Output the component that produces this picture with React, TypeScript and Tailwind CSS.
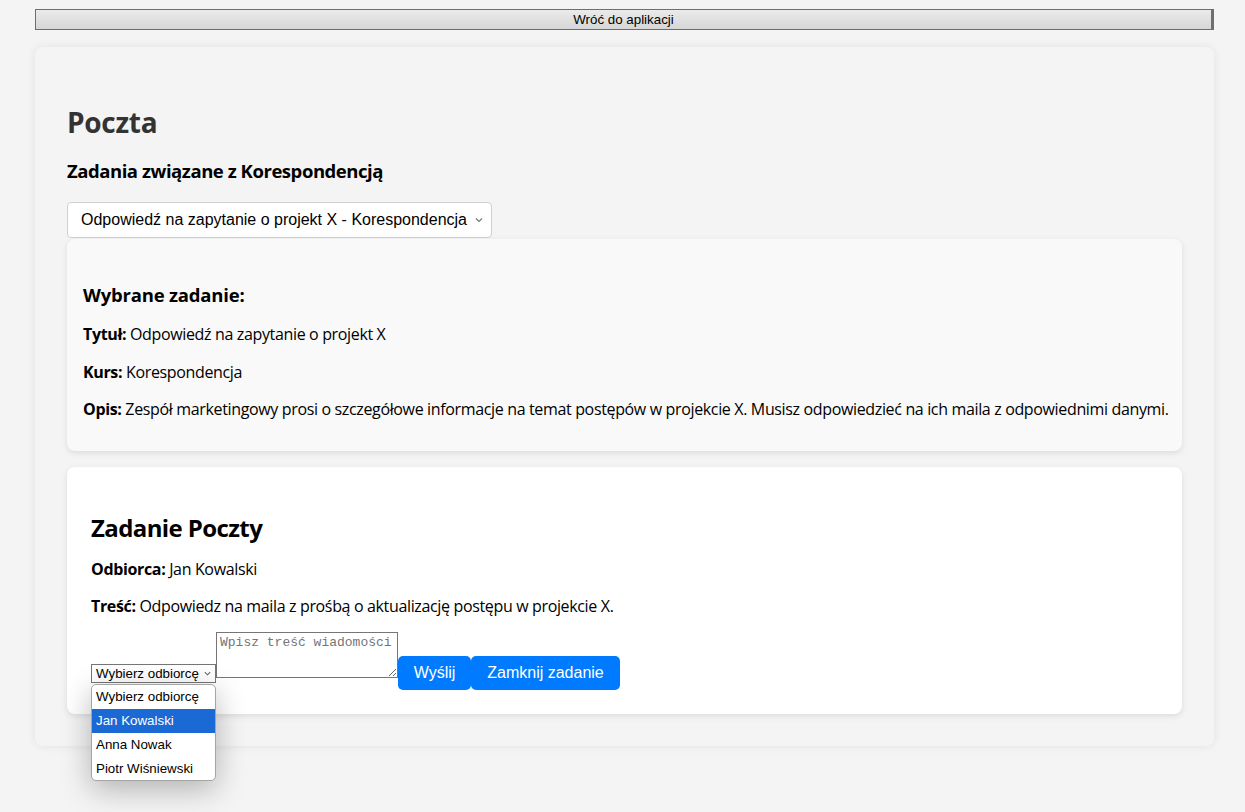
import React from "react";

export default function App() {
  return (
    <div className="min-h-[812px] bg-[#f4f4f4] px-[35px] pt-[9px] pb-[66px] font-['Open_Sans',sans-serif] text-black">
      <button className="block h-[21px] w-[1179px] border border-r-[3px] border-[#6e6e6e] bg-gradient-to-b from-[#ebebeb] to-[#d6d6d6] text-center font-['Liberation_Sans',Arial,sans-serif] text-[13.33px] leading-[18px] text-black">
        Wróć do aplikacji
      </button>

      <div className="mt-[17px] w-[1179px] rounded-[8px] bg-[#f4f4f4] px-[32px] pt-[57px] pb-[32px] shadow-[0_0_10px_rgba(0,0,0,0.08)]">
        <h1 className="text-[28px] font-bold leading-[36px] text-[#333] tracking-[-0.3px]">Poczta</h1>
        <h2 className="mt-[19px] text-[18.5px] font-bold leading-[24px] tracking-[-0.45px]">Zadania związane z Korespondencją</h2>

        <div className="mt-[19px] flex h-[36px] w-[425px] items-center justify-between rounded-[4px] border border-[#cfcfcf] bg-white pl-[13px] pr-[7px] font-['Liberation_Sans',Arial,sans-serif] text-[16px] text-black">
          <span>Odpowiedź na zapytanie o projekt X - Korespondencja</span>
          <svg width="10" height="10" viewBox="0 0 10 10" className="text-[#777]">
            <path d="M2 3.5 L5 6.5 L8 3.5" fill="none" stroke="currentColor" strokeWidth="1.2" />
          </svg>
        </div>

        <div className="mt-px flex flex-col rounded-[8px] bg-[#f9f9f9] px-4 pt-[44px] pb-[30px] shadow-[0_2px_6px_rgba(0,0,0,0.1)]">
          <h3 className="text-[18.5px] font-bold leading-[24px] tracking-[-0.2px]">Wybrane zadanie:</h3>
          <p className="mt-[17px] text-[16px] leading-[21.5px] tracking-[-0.35px]"><b>Tytuł:</b> Odpowiedź na zapytanie o projekt X</p>
          <p className="mt-4 text-[16px] leading-[21.5px] tracking-[-0.35px]"><b>Kurs:</b> Korespondencja</p>
          <p className="mt-4 whitespace-nowrap text-[16px] leading-[21.5px] tracking-[-0.35px]"><b>Opis:</b> Zespół marketingowy prosi o szczegółowe informacje na temat postępów w projekcie X. Musisz odpowiedzieć na ich maila z odpowiednimi danymi.</p>
        </div>

        <div className="mt-4 flex flex-col rounded-[8px] bg-white px-6 pt-[46px] pb-[24px] shadow-[0_2px_6px_rgba(0,0,0,0.1)]">
          <h2 className="text-[24px] font-bold leading-[30px] tracking-[-0.6px]">Zadanie Poczty</h2>
          <p className="mt-4 text-[16px] leading-[21.5px] tracking-[-0.35px]"><b>Odbiorca:</b> Jan Kowalski</p>
          <p className="mt-4 text-[16px] leading-[21.5px] tracking-[-0.35px]"><b>Treść:</b> Odpowiedz na maila z prośbą o aktualizację postępu w projekcie X.</p>

          <div className="mt-[14.5px] flex items-end">
            <div className="relative mb-[7px]">
              <div className="flex h-[19px] w-[125px] items-center justify-between border border-[#767676] bg-white pl-[4px] pr-[3px] font-['Liberation_Sans',Arial,sans-serif] text-[13.33px] text-black">
                <span>Wybierz odbiorcę</span>
                <svg width="9" height="9" viewBox="0 0 10 10" className="text-[#666]">
                  <path d="M2 3.5 L5 6.5 L8 3.5" fill="none" stroke="currentColor" strokeWidth="1.2" />
                </svg>
              </div>
              <div className="absolute left-0 top-[20px] z-10 w-[125px] overflow-hidden rounded-[5px] border border-[#a5a5a5] bg-white font-['Liberation_Sans',Arial,sans-serif] text-[13.33px] shadow-[0_8px_30px_rgba(0,0,0,0.28)]">
                <div className="h-[24px] px-[4px] leading-[24px] text-black">Wybierz odbiorcę</div>
                <div className="h-[24px] bg-[#1a69d4] px-[4px] leading-[24px] text-white">Jan Kowalski</div>
                <div className="h-[24px] px-[4px] leading-[24px] text-black">Anna Nowak</div>
                <div className="h-[23px] px-[4px] leading-[23px] text-black">Piotr Wiśniewski</div>
              </div>
            </div>
            <textarea
              placeholder="Wpisz treść wiadomości"
              className="mb-[12px] h-[46px] w-[182px] border border-[#767676] bg-white px-[3px] py-[2px] font-['Liberation_Mono',monospace] text-[13px] leading-[16px] placeholder:text-[#757575] outline-none"
            />
            <button className="h-[34px] w-[73px] rounded-[5px] bg-[#007bff] font-['Liberation_Sans',Arial,sans-serif] text-[16px] text-white">Wyślij</button>
            <button className="h-[34px] w-[149px] rounded-[5px] bg-[#007bff] font-['Liberation_Sans',Arial,sans-serif] text-[16px] text-white">Zamknij zadanie</button>
          </div>
        </div>
      </div>
    </div>
  );
}
